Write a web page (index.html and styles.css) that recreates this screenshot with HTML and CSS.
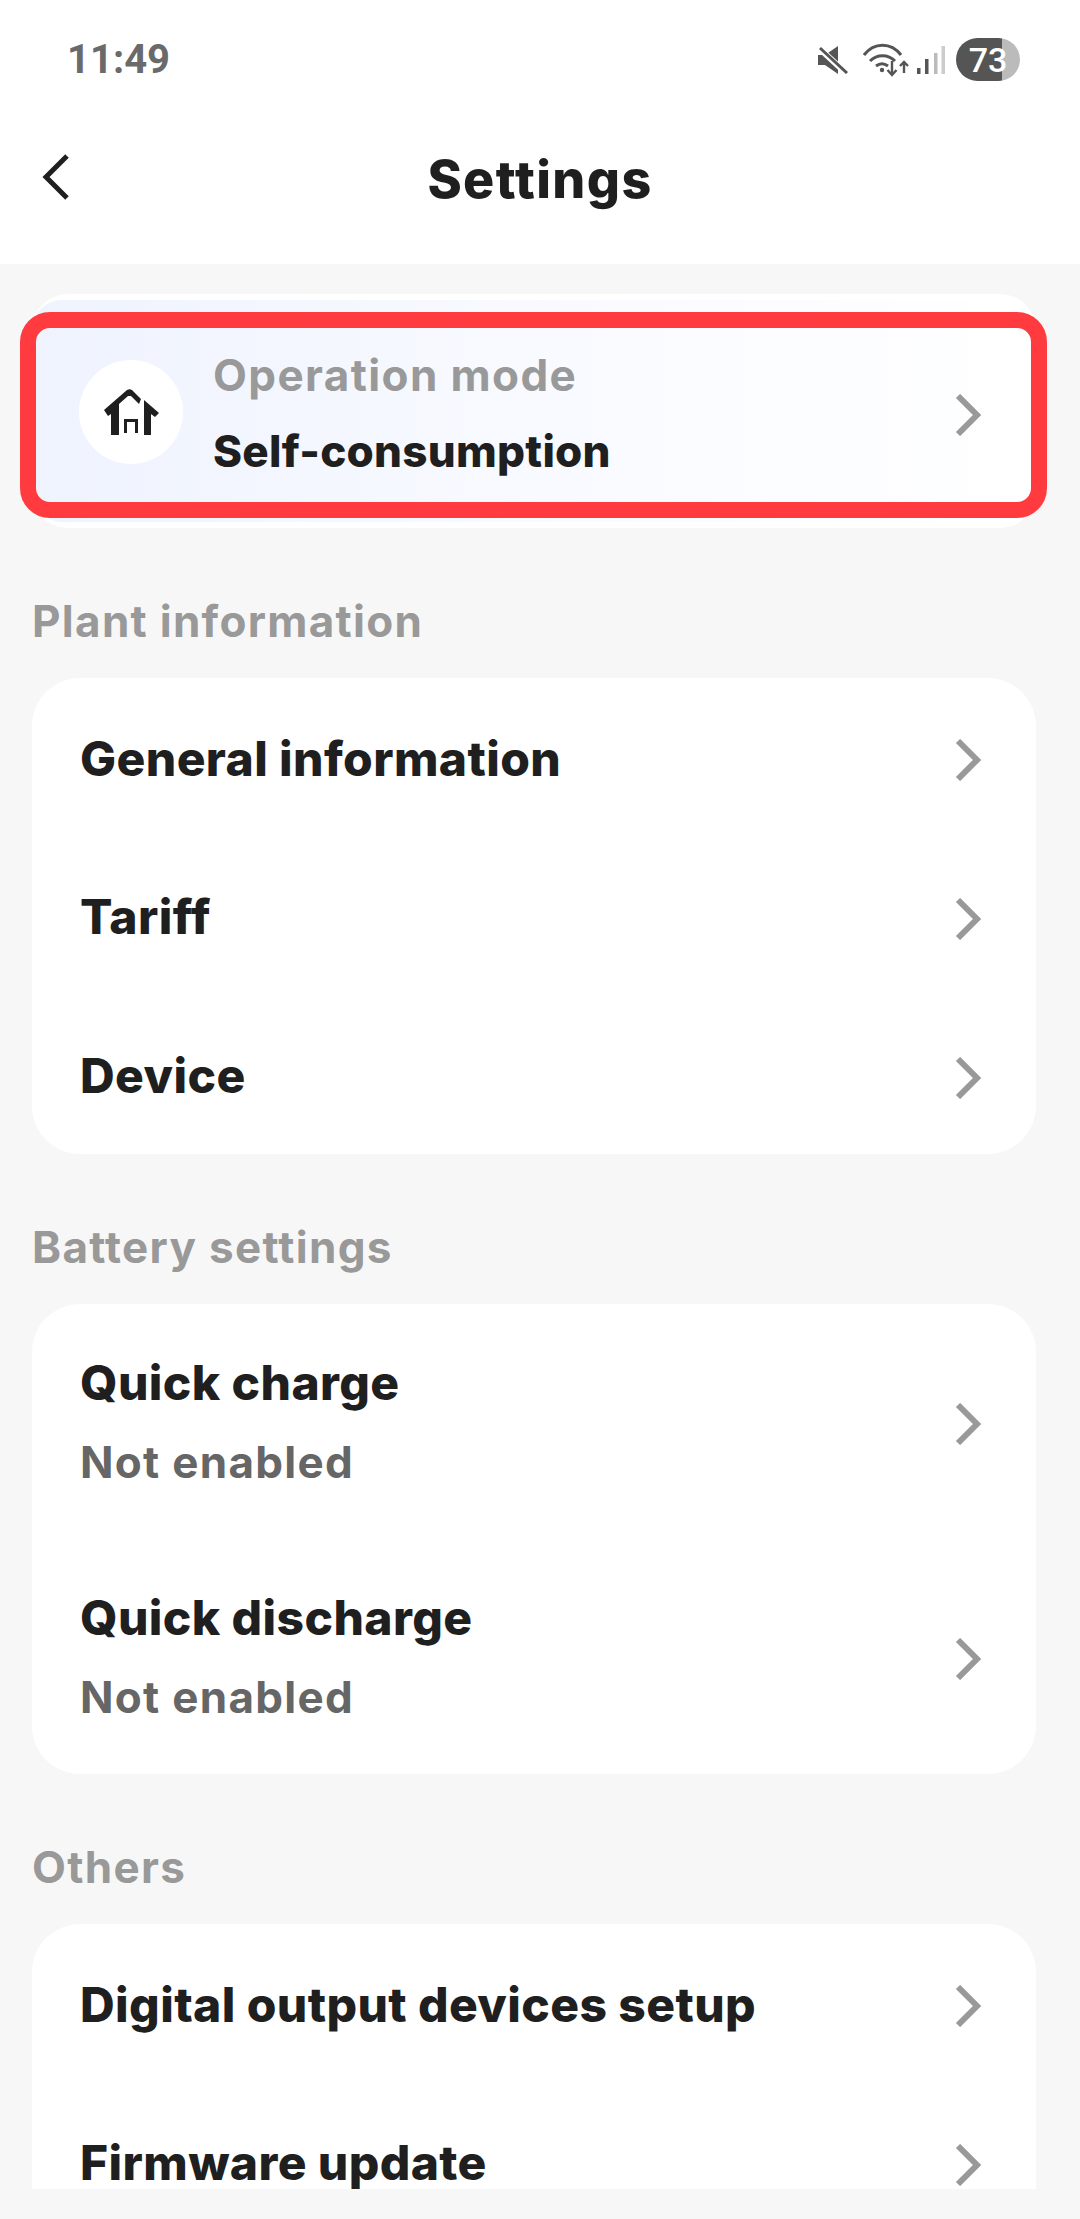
FILE: index.html
```html
<!DOCTYPE html>
<html lang="en">
  <head>
    <meta charset="UTF-8" />
    <title>Settings</title>
    <link rel="stylesheet" href="styles.css">
  </head>
  <body>
    <div class="page">
      <!-- status bar and title -->
      <header class="top">
        <div class="status">
          <span class="time">11:49</span>
          <div class="status-icons">
            <svg class="ic-mute" width="30" height="28" viewBox="0 0 30 28">
              <path d="M0 9h7L20 0v28L7 19H0z" fill="#555" />
              <path d="M2 3l27 25" stroke="#fff" stroke-width="6" fill="none" />
              <path d="M2 2l27 25" stroke="#555" stroke-width="3" fill="none" />
            </svg>
            <svg class="ic-wifi" width="46" height="34" viewBox="0 0 46 34">
              <path d="M1 12C11 -1 28 -1 38 12M7 18c7-7 18-7 25 0M13 23c4-3 8-3 12 0" stroke="#555" stroke-width="3" fill="none" />
              <circle cx="19" cy="27" r="2.2" fill="#555" />
              <path d="M29 18v14M24.500 27l4.500 5 4.500-5M41 30V19M37 23l4-4 4 4" stroke="#555" stroke-width="2.400" fill="none" />
            </svg>
            <svg class="ic-signal" width="28" height="28" viewBox="0 0 28 28">
              <rect x="0" y="22" width="3.500" height="6" fill="#555" />
              <rect x="8" y="13" width="3.500" height="15" fill="#555" />
              <rect x="17" y="7" width="3.500" height="21" fill="#bbb" />
              <rect x="24.500" y="0" width="3.500" height="28" fill="#ccc" />
            </svg>
            <div class="battery"><span class="battery-num">73</span></div>
          </div>
        </div>
        <div class="titlebar">
          <svg class="back" width="30" height="46" viewBox="0 0 30 46">
            <path d="M26 2L5 23l21 21" stroke="#1f1f1f" stroke-width="5" fill="none" />
          </svg>
          <h1 class="title">Settings</h1>
        </div>
      </header>

      <main class="content">
        <div class="mode-card">
          <div class="mode-row">
            <div class="mode-icon">
              <svg width="55" height="46" viewBox="0 0 55 46">
                <path d="M0 21L23 1q2.500-1.500 5 0l9 9-2 5-8-8h-3L15 15v31H7V25l-3 2z" fill="#1f1f1f" />
                <path d="M40 11l15 13-4 4-4-3v21h-7z" fill="#1f1f1f" />
                <path d="M20 44V30h14v14h-3V33h-8v11z" fill="#1f1f1f" />
              </svg>
            </div>
            <div class="mode-text">
              <div class="mode-label">Operation mode</div>
              <div class="mode-value">Self-consumption</div>
            </div>
            <svg class="chev mode-chev" width="26" height="42" viewBox="0 0 26 42"><path d="M3 2l19 19L3 40" /></svg>
          </div>
        </div>

        <h2 class="group-title">Plant information</h2>
        <section class="card">
          <div class="row"><span class="row-name">General information</span><svg class="chev" width="26" height="42" viewBox="0 0 26 42"><path d="M3 2l19 19L3 40" /></svg></div>
          <div class="row"><span class="row-name">Tariff</span><svg class="chev" width="26" height="42" viewBox="0 0 26 42"><path d="M3 2l19 19L3 40" /></svg></div>
          <div class="row"><span class="row-name">Device</span><svg class="chev" width="26" height="42" viewBox="0 0 26 42"><path d="M3 2l19 19L3 40" /></svg></div>
        </section>

        <h2 class="group-title">Battery settings</h2>
        <section class="card">
          <div class="row row-tall">
            <div><div class="row-name">Quick charge</div><div class="row-sub">Not enabled</div></div>
            <svg class="chev" width="26" height="42" viewBox="0 0 26 42"><path d="M3 2l19 19L3 40" /></svg>
          </div>
          <div class="row row-tall">
            <div><div class="row-name">Quick discharge</div><div class="row-sub">Not enabled</div></div>
            <svg class="chev" width="26" height="42" viewBox="0 0 26 42"><path d="M3 2l19 19L3 40" /></svg>
          </div>
        </section>

        <h2 class="group-title">Others</h2>
        <section class="card">
          <div class="row"><span class="row-name">Digital output devices setup</span><svg class="chev" width="26" height="42" viewBox="0 0 26 42"><path d="M3 2l19 19L3 40" /></svg></div>
          <div class="row"><span class="row-name">Firmware update</span><svg class="chev" width="26" height="42" viewBox="0 0 26 42"><path d="M3 2l19 19L3 40" /></svg></div>
        </section>
      </main>

      <div class="bottom-strip"></div>
    </div>
  </body>
</html>
```

FILE: styles.css
```css
* {
  margin: 0;
  padding: 0;
  box-sizing: border-box;
}
body {
  width: 1080px;
  height: 2219px;
  overflow: hidden;
  background-color: #f7f7f7;
  font-family: "Inter", "Liberation Sans", sans-serif;
  color: #1f1f1f;
}
.page {
  height: 2219px;
  display: flex;
  flex-direction: column;
}
/* header */
.top {
  height: 264px;
  flex-shrink: 0;
  background-color: #fff;
}
.status {
  height: 120px;
  padding: 38px 60px 0 67px;
  display: flex;
  justify-content: space-between;
  align-items: flex-start;
}
.time {
  font-family: "Roboto", sans-serif;
  font-size: 40px;
  font-weight: 700;
  line-height: 44px;
  color: #6a6a6a;
}
.status-icons {
  display: flex;
  align-items: center;
}
.ic-mute {
  margin-right: 15px;
}
.ic-wifi {
  margin-right: 8px;
}
.ic-signal {
  margin-right: 11px;
}
.battery {
  width: 64px;
  height: 43px;
  border-radius: 22px;
  background: linear-gradient(90deg, #555 0, #555 72%, #bbb 72%, #bbb 100%);
  display: flex;
  align-items: center;
  justify-content: center;
}
.battery-num {
  font-family: "Roboto", sans-serif;
  font-size: 34px;
  font-weight: 500;
  color: #fff;
}
.titlebar {
  height: 118px;
  padding: 0 71px 0 41px;
  display: flex;
  align-items: center;
}
.back {
  flex-shrink: 0;
  margin-bottom: 4px;
}
.title {
  flex: 1;
  text-align: center;
  font-size: 52px;
  font-weight: 800;
  letter-spacing: 1.4px;
}
/* content */
.content {
  flex: 1;
  min-height: 0;
  overflow: hidden;
  padding: 30px 44px 0 32px;
}
.mode-card {
  height: 234px;
  border-radius: 36px;
  background-color: #fff;
  padding: 6px 0;
}
.mode-row {
  height: 222px;
  padding: 3px 55px 0 47px;
  display: flex;
  align-items: center;
  background: linear-gradient(90deg, #eff3fe 0, #f8faff 50%, #fff 100%);
  border-radius: 30px;
  position: relative;
}
/* red highlight drawn over the card */
.mode-row::after {
  content: "";
  position: absolute;
  left: -12px;
  right: -11px;
  top: 12px;
  bottom: 4px;
  border: 16px solid #ff3b40;
  border-radius: 30px;
}
.mode-icon {
  width: 104px;
  height: 104px;
  border-radius: 50%;
  background-color: #fff;
  display: flex;
  align-items: center;
  justify-content: center;
  flex-shrink: 0;
  margin-top: -1px;
}
.mode-text {
  flex: 1;
  padding-left: 30px;
}
.mode-label {
  font-size: 44px;
  font-weight: 700;
  letter-spacing: 1.4px;
  color: #999;
  line-height: 56px;
}
.mode-value {
  font-size: 44px;
  font-weight: 800;
  letter-spacing: 0.25px;
  line-height: 56px;
  margin-top: 20px;
}
.group-title {
  font-size: 44px;
  font-weight: 700;
  letter-spacing: 1.3px;
  color: #999;
  line-height: 50px;
  padding-top: 68px;
  padding-bottom: 32px;
}
.card {
  background-color: #fff;
  border-radius: 48px;
}
.row {
  height: 158.67px;
  padding: 3px 55px 0 48px;
  display: flex;
  align-items: center;
  justify-content: space-between;
}
.row-tall {
  height: 235px;
  padding-top: 0;
}
.row-name {
  font-size: 48px;
  font-weight: 800;
  letter-spacing: 0.4px;
  line-height: 56px;
}
.row-sub {
  font-size: 44px;
  font-weight: 700;
  letter-spacing: 1.3px;
  color: #666;
  line-height: 50px;
  margin-top: 26px;
}
.chev {
  flex-shrink: 0;
  fill: none;
  stroke: #999;
  stroke-width: 6;
  margin-top: 3px;
}
.mode-chev {
  margin-top: 4px;
}
.row-tall .chev {
  margin-top: 5px;
}
.bottom-strip {
  height: 30px;
  flex-shrink: 0;
  background-color: #f7f7f7;
}
```
